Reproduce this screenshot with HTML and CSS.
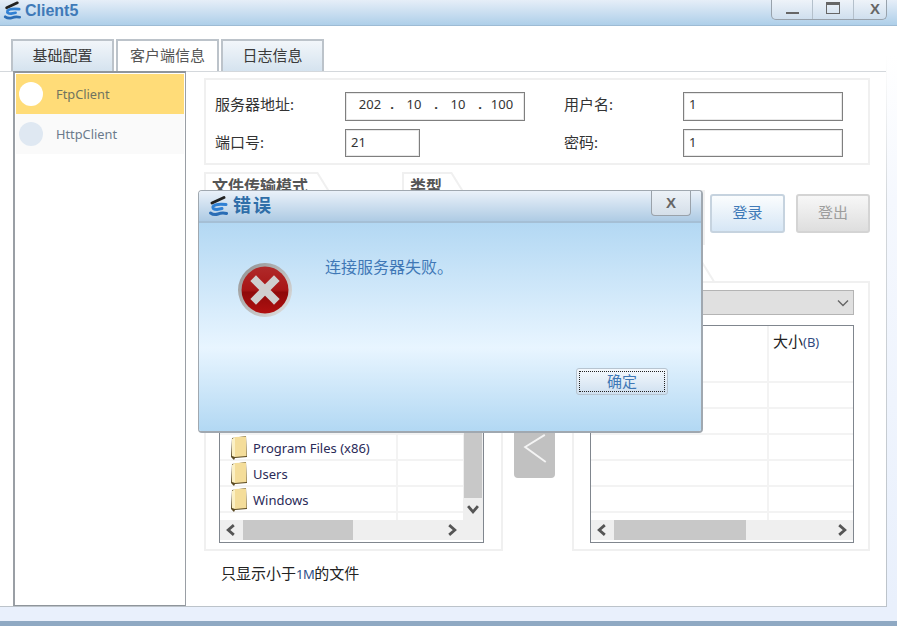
FILE: index.html
```html
<!DOCTYPE html>
<html lang="zh-CN">
<head>
<meta charset="utf-8">
<title>Client5</title>
<link rel="stylesheet" href="styles.css">
</head>
<body>
<svg class="defs" width="0" height="0" aria-hidden="true">
  <defs>
    <symbol id="logo" viewBox="0 0 20 22">
      <path d="M4 8 L16 2.5" fill="none" stroke="#222" stroke-width="3" stroke-linecap="round"/>
      <path d="M18 9.5 Q7 8.5 5 11.5 Q4 14.5 9 14.5 L14 13.5" fill="none" stroke="#2f80d4" stroke-width="3" stroke-linecap="round"/>
      <path d="M2.5 18 Q6 20.5 10 19 Q14 17.5 18.5 18.5" fill="none" stroke="#2a6db5" stroke-width="3" stroke-linecap="round"/>
    </symbol>
    <symbol id="folder" viewBox="0 0 18 25">
      <path d="M2 3 L16 1 L17 22 L5 23 L4 25 L1 22 Z" fill="#5b4a22"/>
      <path d="M5 2 L16 1.5 L16.5 21 L5 22 Z" fill="#f4dd9a"/>
      <path d="M2 4 L5 2 L5 22 L2 21 Z" fill="#fbf0c4"/>
    </symbol>
    <symbol id="chev-left" viewBox="0 0 10 10"><path d="M7 1.5 L3 5 L7 8.5" fill="none" stroke="#555" stroke-width="2"/></symbol>
    <symbol id="chev-right" viewBox="0 0 10 10"><path d="M3 1.5 L7 5 L3 8.5" fill="none" stroke="#555" stroke-width="2"/></symbol>
    <symbol id="chev-down" viewBox="0 0 10 10"><path d="M1.5 3 L5 7 L8.5 3" fill="none" stroke="#555" stroke-width="2"/></symbol>
    <symbol id="chev-thin" viewBox="0 0 14 14"><path d="M2 4.5 L7 9.5 L12 4.5" fill="none" stroke="#666" stroke-width="1.4"/></symbol>
    <linearGradient id="redfill" x1="0" y1="0" x2="0" y2="1">
      <stop offset="0" stop-color="#b02a2a"/><stop offset="0.5" stop-color="#a81616"/><stop offset="0.55" stop-color="#8f0a0a"/><stop offset="1" stop-color="#b01010"/>
    </linearGradient>
    <linearGradient id="ringfill" x1="0" y1="0" x2="1" y2="1">
      <stop offset="0" stop-color="#8e8e8e"/><stop offset="1" stop-color="#e4e4e4"/>
    </linearGradient>
  </defs>
</svg>

<div class="app">
  <header class="titlebar">
    <svg class="logo"><use href="#logo"/></svg>
    <span class="app-title">Client5</span>
    <div class="winbtns">
      <span class="winbtn"><i class="ico-min"></i></span>
      <span class="winbtn"><i class="ico-max"></i></span>
      <span class="winbtn winbtn-x">X</span>
    </div>
  </header>

  <main class="workspace">
    <nav class="tabs">
      <span class="tab tab-blue">基础配置</span>
      <span class="tab tab-active">客户端信息</span>
      <span class="tab tab-blue">日志信息</span>
    </nav>

    <div class="tabbody">
      <aside class="sidebar">
        <div class="side-item side-on"><i class="dot dot-white"></i>FtpClient</div>
        <div class="side-item"><i class="dot"></i>HttpClient</div>
      </aside>

      <section class="content">
        <div class="server">
          <label class="lbl lbl-top">服务器地址:</label>
          <div class="field ip field-top">
            <span>202</span><b>.</b><span>10</span><b>.</b><span>10</span><b>.</b><span>100</span>
          </div>
          <label class="lbl lbl-top">用户名:</label>
          <div class="field field-top">1</div>
          <label class="lbl lbl-low">端口号:</label>
          <div class="field field-port field-low">21</div>
          <label class="lbl lbl-low">密码:</label>
          <div class="field field-low">1</div>
        </div>

        <div class="midrow">
          <div class="group group-mode">
            <div class="gtab gtab-mode">文件传输模式</div>
          </div>
          <div class="group group-type">
            <div class="gtab gtab-type">类型</div>
            <div class="gpanel"></div>
          </div>
          <div class="actions">
            <button class="btn btn-login">登录</button>
            <button class="btn btn-logout">登出</button>
          </div>
        </div>

        <div class="filerow">
          <div class="fgroup fgroup-left">
            <div class="gtab gtab-file"></div>
            <div class="fpanel fpanel-left">
              <div class="ftable">
                <div class="fbody">
                  <div class="rows">
                    <div class="row row-head"><span class="c1"></span><span class="c2"></span></div>
                    <div class="row"><span class="c1"></span><span class="c2"></span></div>
                    <div class="row"><span class="c1"></span><span class="c2"></span></div>
                    <div class="row"><span class="c1"><svg class="folder"><use href="#folder"/></svg>Program Files (x86)</span><span class="c2"></span></div>
                    <div class="row"><span class="c1"><svg class="folder"><use href="#folder"/></svg>Users</span><span class="c2"></span></div>
                    <div class="row"><span class="c1"><svg class="folder"><use href="#folder"/></svg>Windows</span><span class="c2"></span></div>
                    <div class="row"><span class="c1"></span><span class="c2"></span></div>
                  </div>
                  <div class="vscroll">
                    <div class="vthumb"></div>
                    <svg class="vchev"><use href="#chev-down"/></svg>
                  </div>
                </div>
                <div class="hscroll hscroll-left">
                  <svg class="hchev"><use href="#chev-left"/></svg>
                  <div class="hthumb hthumb-left"></div>
                  <span class="hgap"></span>
                  <svg class="hchev"><use href="#chev-right"/></svg>
                </div>
              </div>
            </div>
          </div>

          <div class="movers">
            <div class="mover"></div>
            <div class="mover">
              <svg class="mover-ico" viewBox="0 0 26 32"><path d="M24 2 L3 15 L25 31" fill="none" stroke="#f4f4f4" stroke-width="2"/></svg>
            </div>
          </div>

          <div class="fgroup fgroup-right">
            <div class="gtab gtab-file gtab-remote"></div>
            <div class="fpanel fpanel-right">
              <div class="combo"><svg class="combo-chev"><use href="#chev-thin"/></svg></div>
              <div class="ftable">
                <div class="fbody">
                  <div class="rows">
                    <div class="row row-head"><span class="c1"></span><span class="c2 head-size">大小<small>(B)</small></span></div>
                    <div class="row"><span class="c1"></span><span class="c2"></span></div>
                    <div class="row"><span class="c1"></span><span class="c2"></span></div>
                    <div class="row"><span class="c1"></span><span class="c2"></span></div>
                    <div class="row"><span class="c1"></span><span class="c2"></span></div>
                    <div class="row"><span class="c1"></span><span class="c2"></span></div>
                    <div class="row"><span class="c1"></span><span class="c2"></span></div>
                  </div>
                </div>
                <div class="hscroll">
                  <svg class="hchev"><use href="#chev-left"/></svg>
                  <div class="hthumb hthumb-right"></div>
                  <span class="hgap"></span>
                  <svg class="hchev"><use href="#chev-right"/></svg>
                </div>
              </div>
            </div>
          </div>
        </div>

        <p class="note">只显示小于<span class="note-m">1M</span>的文件</p>
      </section>
    </div>
  </main>

  <div class="strip"></div>
  <div class="basebar"></div>

  <div class="dialog">
    <div class="dlg-title">
      <svg class="dlg-logo"><use href="#logo"/></svg>
      <span class="dlg-name">错误</span>
      <span class="dlg-close">X</span>
    </div>
    <div class="dlg-body">
      <div class="dlg-msg">
        <svg class="err" viewBox="0 0 54 54">
          <circle cx="27" cy="27" r="27" fill="url(#ringfill)"/>
          <circle cx="27" cy="27" r="23.5" fill="url(#redfill)"/>
          <path d="M18 18 L36 36 M36 18 L18 36" stroke="#cfcfcf" stroke-width="8" stroke-linecap="square"/>
        </svg>
        <span class="dlg-text">连接服务器失败。</span>
      </div>
      <button class="dlg-ok"><span>确定</span></button>
    </div>
  </div>
</div>
</body>
</html>
```

FILE: styles.css
```css
* { box-sizing: border-box; }
html, body { margin: 0; padding: 0; }
body {
  width: 897px;
  height: 626px;
  overflow: hidden;
  background: #fff;
  font-family: "Noto Sans", "Noto Sans CJK SC", sans-serif;
  color: #333;
}
.defs { position: absolute; }
.app { position: relative; width: 897px; height: 626px; display: flex; flex-direction: column; }

/* title bar */
.titlebar {
  height: 26px;
  flex: none;
  display: flex;
  align-items: center;
  padding-left: 3px;
  background: linear-gradient(#e6eef8, #aecfe9);
  border-bottom: 1px solid #9dbbd4;
}
.logo { width: 18px; height: 21px; margin: -4px 4px 0 0; }
.app-title { font: bold 16px "Liberation Sans", sans-serif; color: #3f7ab8; margin-top: -3px; }
.winbtns {
  margin-left: auto;
  margin-right: 10px;
  margin-top: -6px;
  height: 20px;
  width: 116px;
  display: flex;
  background: linear-gradient(#eef3f9, #cfdfee);
  border: 1px solid #98a2ac;
  border-top: 0;
  border-radius: 0 0 5px 5px;
}
.winbtn { width: 41px; flex: none; display: flex; align-items: center; justify-content: center; border-right: 1px solid #b4c0cb; }
.winbtn-x { width: 33px; border-right: 0; padding: 0 0 2px 9px; font: bold 15px "Liberation Sans", sans-serif; color: #666; }
.ico-min { width: 13px; height: 2px; background: #666; margin-top: 8px; }
.ico-max { width: 14px; height: 12px; border: 1px solid #666; border-top-width: 3px; margin-top: -2px; }

/* workspace */
.workspace {
  height: 581px;
  flex: none;
  background: #fff;
  width: 887px;
  border-bottom: 1px solid #bcc3ca;
  padding: 13px 0 0 11px;
  display: flex;
  flex-direction: column;
}
.strip { height: 14px; flex: none; background: #e9f0fc; }
.basebar { height: 5px; flex: none; background: #8fa9c3; }
.app::after {
  content: "";
  position: absolute;
  right: 0;
  top: 26px;
  width: 11px;
  height: 581px;
  background:
    linear-gradient(#fff 5%, #d4d8dc 30%, #bcc3ca) left top / 1px 100% no-repeat,
    linear-gradient(#fff 5%, #f5f8fe 30%, #e9f0fc);
}

.tabs { display: flex; gap: 2px; height: 32px; flex: none; }
.tab {
  width: 103px;
  display: flex;
  align-items: center;
  justify-content: center;
  font-size: 15px;
  border: 2px solid #bcc3ca;
  border-bottom: 0;
  padding-bottom: 4px;
}
.tab-blue { background: linear-gradient(#f2f6fa, #d5e3ef); color: #3a3a3a; }
.tab-active { background: #fff; color: #555; }

.tabbody {
  flex: 1;
  display: flex;
  margin-left: -11px;
  padding-left: 13px;
  border-top: 1px solid #d4d8dc;
  min-height: 0;
}
.sidebar {
  width: 173px;
  flex: none;
  margin-top: -1px;
  border: 2px solid #a0a6ac;
  border-right-width: 1px;
  border-bottom-width: 1px;
  border-color: #8f959b #9a9fa5 #8f959b #9a9fa5;
  padding: 1px 1px 0 1px;
  background: #fff;
}
.side-item {
  height: 40px;
  display: flex;
  align-items: center;
  font-size: 12.8px;
  padding-left: 3px;
  background: #fafafa;
  color: #6c7a8c;
}
.side-on { background: #ffdc78; color: #6f7460; }
.dot { width: 24px; height: 24px; border-radius: 50%; background: #dfe8f2; margin-right: 13px; flex: none; }
.dot-white { background: #fff; }

.content { margin-left: 18px; width: 666px; flex: none; padding-top: 6px; }

/* server */
.server {
  height: 87px;
  border: 2px solid #f0f0f0;
  padding: 12px 0 0 9px;
  display: grid;
  grid-template-columns: 130px 219px 119px 160px;
  grid-template-rows: 29px 28px;
  row-gap: 8px;
  align-items: center;
}
.lbl { font-size: 15px; color: #333; }
.lbl-top { padding-bottom: 6px; }
.lbl-low { padding-bottom: 4px; }
.field {
  height: 100%;
  border: 1px solid #7f7f7f;
  box-shadow: inset 0 0 0 1px #e8e8e8;
  font-size: 13px;
  display: flex;
  align-items: center;
  padding-left: 5px;
  color: #333;
  background: #fff;
}
.field-top { padding-bottom: 5px; }
.field-low { padding-bottom: 2px; }
.field-port { width: 75px; }
.ip { width: 180px; padding-left: 9px; }
.ip span { width: 30px; text-align: center; }
.ip b { width: 14px; text-align: center; font-weight: 700; }

/* middle row */
.midrow { display: flex; height: 75px; margin-top: 7px; }
.group { position: relative; }
.group-mode { width: 198px; }
.group-type { width: 303px; }
.gtab {
  position: relative;
  height: 20px;
  border-top: 2px solid #f0f0f0;
  border-left: 2px solid #f0f0f0;
  background: #fff;
  z-index: 1;
  font-size: 16px;
  font-weight: 700;
  color: #555;
  padding: 2px 0 0 6px;
  line-height: 20px;
  white-space: nowrap;
}
.gtab::after {
  content: "";
  position: absolute;
  left: 100%;
  top: -2px;
  width: 22px;
  height: 2px;
  background: #f0f0f0;
  transform-origin: 0 0;
  transform: rotate(58deg);
}
.gtab-mode { width: 114px; }
.gtab-type { width: 50px; }
.gpanel { height: 55px; margin-top: -2px; border: 2px solid #f0f0f0; }
.actions { display: flex; gap: 11px; padding: 22px 0 0 5px; align-items: flex-start; }
.btn {
  width: 75px;
  height: 39px;
  font: 15px "Noto Sans CJK SC", sans-serif;
  border-radius: 3px;
  padding: 0 0 4px;
}
.btn-login { border: 2px solid #c6d3df; background: linear-gradient(#fbfdfe, #d6e6f5); color: #3f7ab8; }
.btn-logout { width: 74px; border: 2px solid #d4d4d4; background: linear-gradient(#f7f7f7, #dedede); color: #9d9d9d; }

/* file panels */
.filerow { display: flex; margin-top: 15px; height: 289px; }
.fgroup { display: flex; flex-direction: column; }
.fgroup-left { width: 299px; }
.fgroup-right { width: 298px; }
.gtab-file { height: 20px; width: 120px; flex: none; margin-bottom: -1px; }
.gtab-remote { width: 131px; }
.fpanel { flex: 1; border: 2px solid #f0f0f0; min-height: 0; display: flex; flex-direction: column; }
.fpanel-left { padding: 42px 17px 6px 13px; }
.fpanel-right { padding: 7px 14px 6px 16px; }
.combo {
  height: 25px;
  flex: none;
  margin-bottom: 10px;
  background: #e0e0e0;
  border: 1px solid #b4b4b4;
  display: flex;
  align-items: center;
  justify-content: flex-end;
  padding-right: 3px;
}
.combo-chev { width: 14px; height: 14px; }
.ftable {
  flex: 1;
  min-height: 0;
  border: 1px solid #80868e;
  display: flex;
  flex-direction: column;
  padding-bottom: 2px;
  background: #fff;
}
.fbody { flex: 1; min-height: 0; display: flex; }
.rows { flex: 1; min-width: 0; overflow: hidden; }
.row { height: 26px; display: flex; border-bottom: 2px solid #f3f3f3; }
.row-head { height: 57px; }
.c1 {
  width: 178px;
  flex: none;
  display: flex;
  align-items: center;
  padding: 2px 0 0 10px;
  border-right: 2px solid #f3f3f3;
  font-size: 13px;
  color: #2a2a58;
  white-space: nowrap;
}
.c2 { flex: 1; }
.folder { width: 18px; height: 25px; margin: -2px 5px 0 0; flex: none; }
.head-size { font-size: 15px; color: #222; padding: 3px 0 0 4px; line-height: 24px; }
.head-size small { font-size: 13px; color: #304a80; }
.vscroll { width: 20px; flex: none; background: #efefef; padding: 0 1px; display: flex; flex-direction: column; align-items: center; }
.vthumb { flex: 1; width: 18px; background: #c8c8c8; }
.vchev { width: 14px; height: 22px; flex: none; }
.hscroll { height: 20px; flex: none; display: flex; align-items: center; background: #efefef; }
.hscroll-left { padding-right: 20px; }
.hchev { width: 22px; height: 14px; flex: none; }
.hthumb { height: 100%; background: #c8c8c8; margin-left: 1px; flex: none; }
.hthumb-left { width: 110px; }
.hthumb-right { width: 132px; }
.hgap { flex: 1; }

.movers { width: 69px; flex: none; padding: 90px 0 0 11px; display: flex; flex-direction: column; gap: 6px; }
.mover {
  width: 41px;
  height: 60px;
  flex: none;
  background: #c1c1c1;
  border-radius: 0 0 4px 4px;
  display: flex;
  align-items: center;
  justify-content: center;
}
.mover-ico { width: 25px; height: 30px; }

.note { margin: 12px 0 0 17px; font-size: 15px; line-height: 20px; color: #222; }
.note-m { font-size: 13px; letter-spacing: -0.5px; color: #2b4f8a; }

/* dialog */
.dialog {
  position: absolute;
  left: 198px;
  top: 190px;
  width: 505px;
  height: 243px;
  border: 1px solid #a0a8b0;
  border-right-width: 2px;
  border-bottom-width: 2px;
  border-radius: 4px;
  display: flex;
  flex-direction: column;
  overflow: hidden;
  z-index: 5;
}
.dlg-title {
  height: 32px;
  flex: none;
  display: flex;
  align-items: center;
  padding-left: 9px;
  background: linear-gradient(#eaf1f9, #aecbe4);
  border-bottom: 2px solid #a5bfd5;
}
.dlg-logo { width: 20px; height: 22px; margin-right: 5px; }
.dlg-name { font: bold 18px/22px "Noto Sans CJK SC", sans-serif; color: #2f6ea8; letter-spacing: 2px; margin-top: -4px; }
.dlg-close {
  margin-left: auto;
  margin-right: 10px;
  margin-top: -6px;
  width: 40px;
  height: 26px;
  display: flex;
  align-items: center;
  justify-content: center;
  border: 1px solid #9aa2aa;
  border-top: 0;
  border-radius: 0 0 4px 4px;
  background: linear-gradient(#eef3f8, #d5dfe9);
  font: bold 15px "Liberation Sans", sans-serif;
  color: #666;
}
.dlg-body {
  flex: 1;
  min-height: 0;
  display: flex;
  flex-direction: column;
  padding: 32px 33px 0 39px;
  background: linear-gradient(#b3d8f3, #e8f5ff 60%, #b2d8f3);
}
.dlg-msg { display: flex; align-items: flex-start; gap: 33px; height: 62px; }
.err { width: 54px; height: 54px; margin-top: 8px; flex: none; }
.dlg-text { font: 16px/22px "Noto Sans CJK SC", sans-serif; color: #3f78b6; }
.dlg-ok {
  align-self: flex-end;
  margin-top: 51px;
  width: 92px;
  height: 27px;
  padding: 2px;
  border: 1px solid #b7c4d0;
  border-radius: 3px;
  background: linear-gradient(#f5f9fd, #cfe0f0);
  font: 15px "Noto Sans CJK SC", sans-serif;
  color: #3f78b6;
}
.dlg-ok span {
  display: flex;
  align-items: center;
  justify-content: center;
  height: 100%;
  border: 1px dotted #222;
  padding-bottom: 3px;
}
```
